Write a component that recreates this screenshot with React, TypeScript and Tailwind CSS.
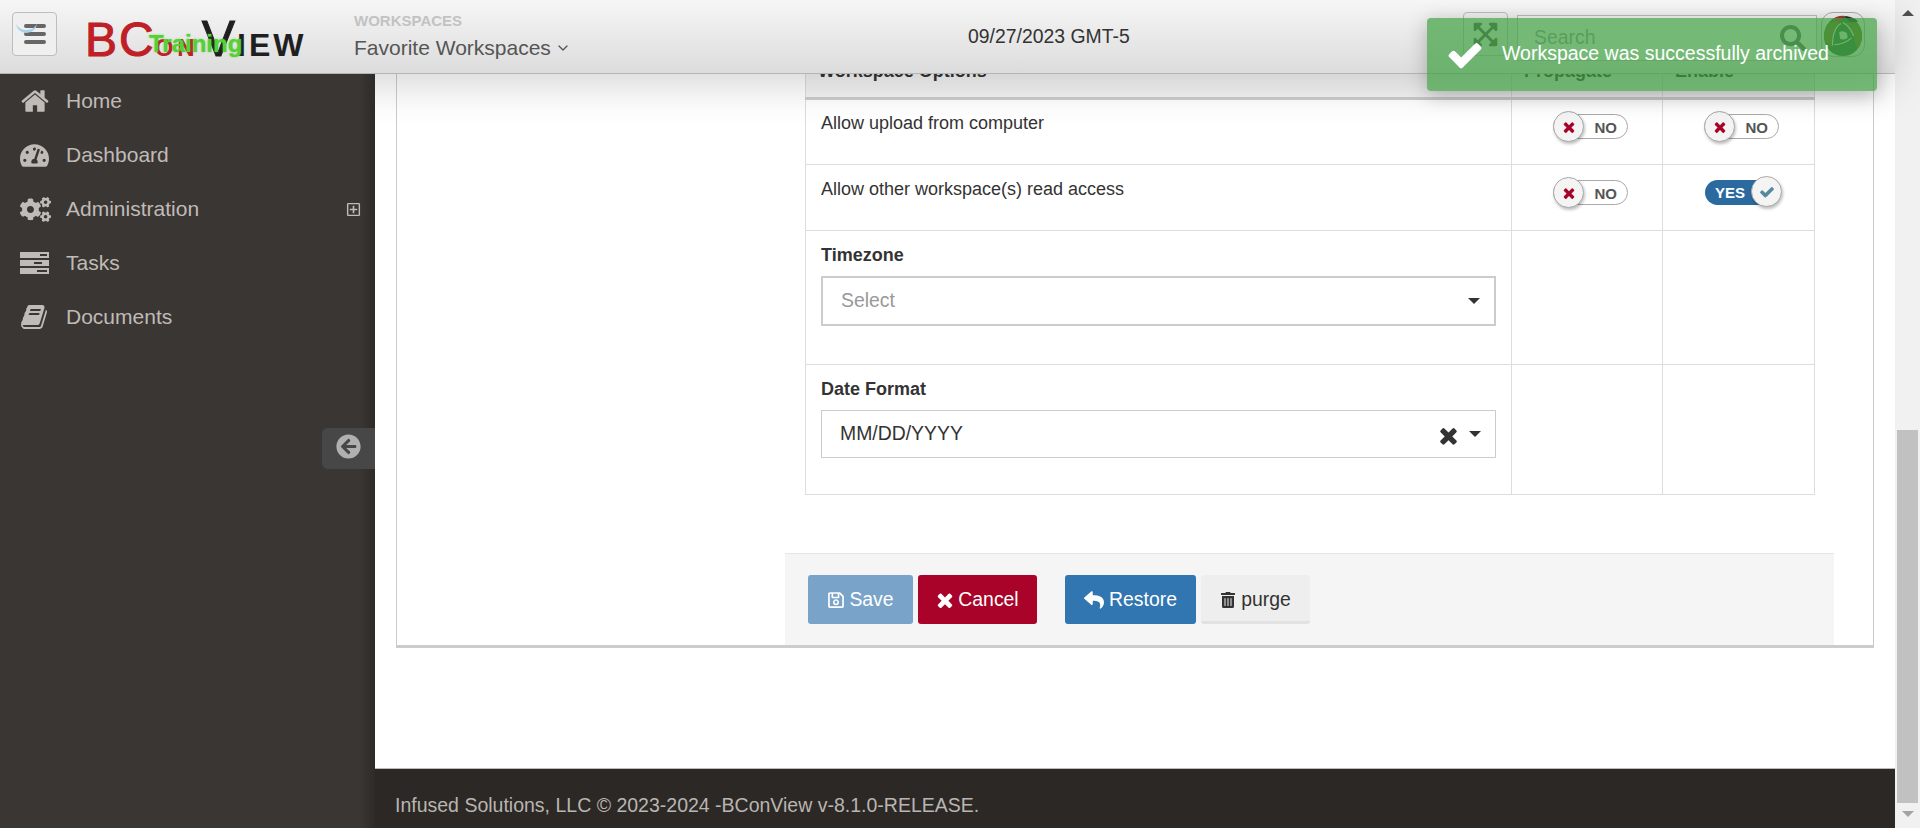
import React from "react";
import {
  FaArrowCircleLeft,
  FaCogs,
  FaExpandArrowsAlt,
  FaRegPlusSquare,
  FaRegSave,
  FaReply,
  FaSearch,
  FaTachometerAlt,
  FaTrashAlt,
} from "react-icons/fa";
import { ChevronDown } from "lucide-react";

function HomeIcon() {
  return (
    <svg viewBox="0 0 1792 1792" className="w-[30px] h-[30px] fill-current">
      <path d="M1472 992v480q0 26-19 45t-45 19h-384v-384h-256v384h-384q-26 0-45-19t-19-45v-480q0-1 .5-3t.5-3l575-474 575 474q1 2 1 6zm223-69l-62 74q-8 9-21 11h-3q-13 0-21-7l-692-577-692 577q-12 8-24 7-13-2-21-11l-62-74q-8-10-7-23.5t11-21.5l719-599q32-26 76-26t76 26l244 204v-195q0-14 9-23t23-9h192q14 0 23 9t9 23v408l219 182q10 8 11 21.5t-7 23.5z" />
    </svg>
  );
}

function BookIcon() {
  return (
    <svg viewBox="0 0 1792 1792" className="w-[28px] h-[28px] fill-current">
      <path d="M1703 478q40 57 18 129l-275 906q-19 64-76.5 107.5t-122.5 43.5h-923q-77 0-148.5-53.5t-99.5-131.5q-24-67-2-127 0-4 3-27t4-37q1-8-3-21.5t-3-19.5q2-11 8-21t16.5-23.5 16.5-23.5q23-38 45-91.5t30-91.5q3-10 .5-30t-.5-28q3-11 17-28t17-23q21-36 42-92t25-90q1-9-2.5-32t.5-28q4-13 22-30.5t22-22.5q19-26 42.5-84.5t27.5-96.5q1-8-3-25.5t-2-26.5q2-8 9-18t18-23 17-21q8-12 16.5-30.5t15-35 16-36 19.5-32 26.5-23.5 36-11.5 47.5 5.5l-1 3q38-9 51-9h761q74 0 114 56t18 130l-274 906q-36 119-71.5 153.5t-128.5 34.5h-869q-27 0-38 15-11 16-1 43 24 70 144 70h923q29 0 56-15.5t35-41.5l300-987q7-22 5-57 38 15 59 43zm-1064 2q-4 13 2 22.5t20 9.5h608q13 0 25.5-9.5t16.5-22.5l21-64q4-13-2-22.5t-20-9.5h-608q-13 0-25.5 9.5t-16.5 22.5zm-83 256q-4 13 2 22.5t20 9.5h608q13 0 25.5-9.5t16.5-22.5l21-64q4-13-2-22.5t-20-9.5h-608q-13 0-25.5 9.5t-16.5 22.5z" />
    </svg>
  );
}

function TasksIcon() {
  return (
    <svg viewBox="0 0 29 22" className="w-[29px] h-[22px] fill-current">
      <path fillRule="evenodd" d="M0 0h29v6H0zM20 2v2h7V2zM0 8h29v6H0zM14 10v2h8v-2zM0 16h29v6H0zM17 18v2h10v-2z" />
    </svg>
  );
}

function TimesIcon({ size }: { size: number }) {
  return (
    <svg viewBox="0 0 1792 1792" width={size} height={size} className="fill-current shrink-0">
      <path d="M1490 1322q0 40-28 68l-136 136q-28 28-68 28t-68-28l-294-294-294 294q-28 28-68 28t-68-28l-136-136q-28-28-28-68t28-68l294-294-294-294q-28-28-28-68t28-68l136-136q28-28 68-28t68 28l294 294 294-294q28-28 68-28t68 28l136 136q28 28 28 68t-28 68l-294 294 294 294q28 28 28 68z" />
    </svg>
  );
}

function CheckIcon({ size }: { size: number }) {
  return (
    <svg viewBox="0 0 1792 1792" width={size} height={size} className="fill-current shrink-0">
      <path d="M1671 566q0 40-28 68l-724 724-136 136q-28 28-68 28t-68-28l-136-136-362-362q-28-28-28-68t28-68l136-136q28-28 68-28t68 28l294 295 656-657q28-28 68-28t68 28l136 136q28 28 28 68z" />
    </svg>
  );
}

function Avatar() {
  return (
    <svg viewBox="0 0 44 46" className="w-[42px] h-[44px]">
      <ellipse cx="22" cy="24" rx="20" ry="21" fill="#2c6a35" />
      <path d="M10 7 Q17 2 24 3 L18 9 Q13 8 10 7z" fill="#b03030" />
      <path d="M24 3 Q34 4 38 9 L29 9 Q26 7 24 3z" fill="#2a2a2a" />
      <path d="M2 26 Q2 14 12 8 Q17 9 20 11 Q11 16 11 36 Q3 32 2 26z" fill="#6b6d1e" />
      <path d="M22 10 Q31 9 37 11 Q42 17 42 25 Q41 33 37 37 Q33 28 33 22 Q30 15 22 10z" fill="#6b6d1e" />
      <path d="M18 20 Q22 18 26 21 L27 26 Q23 29 19 27z" fill="#cfe3cf" />
      <path d="M13 33 Q23 33 31 26 M22 10 Q30 15 33 24 M20 11 Q11 16 11 34" fill="none" stroke="#e8e8e8" strokeWidth="1.2" />
    </svg>
  );
}

function NoToggle() {
  return (
    <div className="relative ml-[41px] w-[75px] h-[25px] mt-[3px] rounded-full border border-[#aaa] bg-white">
      <span className="absolute right-[10px] top-[2px] text-[15px] font-bold text-[#555]">NO</span>
      <span className="absolute -left-px -top-[4px] w-[31px] h-[31px] rounded-full border border-[#aaa] bg-[#f4f4f4] shadow-[1px_2px_3px_rgba(0,0,0,0.25)] flex items-center justify-center text-[#a90329]">
        <TimesIcon size={16} />
      </span>
    </div>
  );
}

function YesToggle() {
  return (
    <div className="relative ml-[42px] w-[70px] h-[25px] mt-[3px] rounded-full bg-[#2a6a9e]">
      <span className="absolute left-[10px] top-[2px] text-[15px] font-bold text-white">YES</span>
      <span className="absolute -right-[7px] -top-[4px] w-[31px] h-[31px] rounded-full border border-[#aaa] bg-[#f4f4f4] shadow-[1px_2px_3px_rgba(0,0,0,0.25)] flex items-center justify-center text-[#57889c]">
        <CheckIcon size={16} />
      </span>
    </div>
  );
}

function Caret() {
  return <span className="w-0 h-0 border-x-[6px] border-x-transparent border-t-[6px] border-t-[#333]" />;
}

const navItems = [
  { label: "Home", icon: <HomeIcon /> },
  { label: "Dashboard", icon: <FaTachometerAlt size={29} /> },
  { label: "Administration", icon: <FaCogs size={31} />, expandable: true },
  { label: "Tasks", icon: <TasksIcon /> },
  { label: "Documents", icon: <BookIcon /> },
];

function Sidebar() {
  return (
    <aside className="relative z-20 w-[375px] shrink-0 bg-[linear-gradient(to_right,#3a3633_96%,#2e2a27)] text-[#c0bbb7]">
      <nav className="flex flex-col">
        {navItems.map((item) => (
          <div key={item.label} className="flex items-center h-[54px] pl-[20px] text-[21px]">
            <span className="w-[46px] flex justify-start">{item.icon}</span>
            <span>{item.label}</span>
            {item.expandable && <FaRegPlusSquare size={15} className="ml-auto mr-[14px] text-[#c0bbb7]" />}
          </div>
        ))}
      </nav>
      <div className="absolute right-0 top-[354px] w-[53px] h-[41px] rounded-l-md bg-[#474747] flex items-start pt-[6px] pl-[14px] text-[#b0b0b0]">
        <FaArrowCircleLeft size={25} />
      </div>
    </aside>
  );
}

function Header() {
  return (
    <header className="relative z-10 h-[74px] shrink-0 flex items-start border-b border-[#b5b5b5] bg-[linear-gradient(to_bottom,#f6f6f6,#dcdcdc)] shadow-[0_12px_40px_rgba(0,0,0,0.16)]">
      <div className="relative mt-[12px] ml-[12px] w-[45px] h-[44px] rounded border border-[#bdbdbd] bg-[#efefef] flex flex-col items-center justify-center gap-[4px]">
        <span className="w-[22px] h-[4px] rounded-sm bg-[#666]" />
        <span className="w-[22px] h-[4px] rounded-sm bg-[#666]" />
        <span className="w-[22px] h-[4px] rounded-sm bg-[#666]" />
        <span className="absolute left-[3px] top-[6px] w-[21px] h-[14px] rounded-b-full border-b-[3px] border-[#a9d3ec]" />
      </div>
      <div className="relative ml-[28px] mt-[14px] w-[269px] h-[48px] flex items-baseline leading-none">
        <span className="text-[48px] text-[#bf2026] tracking-[2px] [-webkit-text-stroke:1px_#bf2026]">BC</span>
        <span className="text-[24px] text-[#bf2026] font-bold tracking-[4px] -ml-px">ON</span>
        <span className="text-[50px] text-[#1f1f1f] [-webkit-text-stroke:1px_#1f1f1f] ml-[3px]">V</span>
        <span className="text-[32px] text-[#1f1f1f] font-bold tracking-[3px] ml-[2px]">IEW</span>
        <span className="absolute left-[64px] top-[18px] text-[24px] font-bold text-[#55d035] [text-shadow:0_0_2px_rgba(80,200,50,0.7)]">Training</span>
      </div>
      <div className="ml-0 mt-[12px] w-[400px]">
        <div className="text-[15px] leading-[18px] font-bold text-[#c2c2c2]">WORKSPACES</div>
        <div className="flex items-center gap-[4px] text-[21px] leading-[30px] mt-[3px] text-[#555]">
          Favorite Workspaces <ChevronDown size={16} />
        </div>
      </div>
      <div className="mt-[22px] ml-[214px] w-[274px] text-[19.4px] leading-[28px] text-[#333]">09/27/2023 GMT-5</div>
      <div className="ml-auto mt-[12px] flex items-start">
        <div className="w-[45px] h-[44px] rounded border border-[#bdbdbd] flex items-center justify-center text-[#555]">
          <FaExpandArrowsAlt size={27} />
        </div>
        <div className="ml-[9px] mt-[3px] w-[300px] h-[46px] border border-[#bbb] bg-[#f4f4f4] flex items-center pl-[16px] pr-[10px] text-[19.4px] text-[#999]">
          Search
          <FaSearch size={26} className="ml-auto text-[#666]" />
        </div>
        <div className="ml-[4px] mr-[30px] w-[44px] h-[45px] rounded-xl border border-[#aaa] flex items-center justify-center">
          <Avatar />
        </div>
      </div>
    </header>
  );
}

function OptionsTable() {
  return (
    <table className="ml-[408px] w-[1009px] table-fixed border-collapse text-[18px] text-[#333]">
      <colgroup>
        <col className="w-[706px]" />
        <col className="w-[151px]" />
        <col className="w-[152px]" />
      </colgroup>
      <thead>
        <tr className="h-[41px] bg-[#f4f4f4] font-bold">
          <th className="border border-[#ddd] border-b-[3px] border-b-[#ccc] text-left pl-[12px] align-top">Workspace Options</th>
          <th className="border border-[#ddd] border-b-[3px] border-b-[#ccc] text-left pl-[12px] align-top">Propagate</th>
          <th className="border border-[#ddd] border-b-[3px] border-b-[#ccc] text-left pl-[12px] align-top">Enable</th>
        </tr>
      </thead>
      <tbody>
        <tr className="h-[66px]">
          <td className="border border-[#ddd] align-top pl-[15px] pt-[10px]">Allow upload from computer</td>
          <td className="border border-[#ddd] align-top pt-[11px]"><NoToggle /></td>
          <td className="border border-[#ddd] align-top pt-[11px]"><NoToggle /></td>
        </tr>
        <tr className="h-[66px]">
          <td className="border border-[#ddd] align-top pl-[15px] pt-[11px]">Allow other workspace(s) read access</td>
          <td className="border border-[#ddd] align-top pt-[12px]"><NoToggle /></td>
          <td className="border border-[#ddd] align-top pt-[12px]"><YesToggle /></td>
        </tr>
        <tr className="h-[134px]">
          <td className="border border-[#ddd] align-top pl-[15px] pr-[15px] pt-[11px]">
            <div className="font-bold leading-[26px] mb-[8px]">Timezone</div>
            <div className="h-[50px] border-2 border-[#ccc] flex items-center pl-[18px] pr-[14px] text-[19.4px] text-[#999]">
              Select
              <span className="ml-auto flex"><Caret /></span>
            </div>
          </td>
          <td className="border border-[#ddd]" />
          <td className="border border-[#ddd]" />
        </tr>
        <tr className="h-[130px]">
          <td className="border border-[#ddd] align-top pl-[15px] pr-[15px] pt-[11px]">
            <div className="font-bold leading-[26px] mb-[8px]">Date Format</div>
            <div className="h-[48px] border border-[#ccc] flex items-center pl-[18px] pr-[14px] text-[19.4px] text-[#333]">
              MM/DD/YYYY
              <span className="ml-auto flex items-center gap-[8px] text-[#333]">
                <span className="mt-[3px] -ml-[3px]"><TimesIcon size={25} /></span>
                <span className="-mt-[1px] flex"><Caret /></span>
              </span>
            </div>
          </td>
          <td className="border border-[#ddd]" />
          <td className="border border-[#ddd]" />
        </tr>
      </tbody>
    </table>
  );
}

function FormActions() {
  return (
    <div className="ml-[388px] mt-[58px] w-[1049px] h-[92px] border-t border-[#e6e6e6] bg-[#f5f5f5] flex items-start pt-[21px] pl-[23px] text-[19.4px]">
      <button className="h-[49px] w-[105px] rounded-[3px] bg-[#79a3c8] text-white flex items-center justify-center gap-[4px]">
        <FaRegSave size={18} /> Save
      </button>
      <button className="ml-[5px] h-[49px] w-[119px] rounded-[3px] bg-[#a90329] text-white flex items-center justify-center gap-[2px] pr-[2px]">
        <TimesIcon size={22} /> Cancel
      </button>
      <button className="ml-[28px] h-[49px] w-[131px] rounded-[3px] bg-[#3276b1] text-white flex items-center justify-center gap-[5px]">
        <FaReply size={20} /> Restore
      </button>
      <button className="ml-[5px] h-[49px] w-[109px] rounded-[3px] bg-[#eeeeee] border-b-[3px] border-[#e2e2e2] text-[#333] flex items-center justify-center gap-[5px] pt-[3px]">
        <FaTrashAlt size={16} /> purge
      </button>
    </div>
  );
}

function Scrollbar() {
  return (
    <div className="w-[25px] shrink-0 bg-[#f1f1f1] flex flex-col items-center">
      <span className="mt-[10px] w-0 h-0 border-x-[6px] border-x-transparent border-b-[6px] border-b-[#505050]" />
      <div className="mt-[414px] w-[21px] h-[373px] bg-[#c1c1c1]" />
      <span className="mt-[8px] w-0 h-0 border-x-[6px] border-x-transparent border-t-[6px] border-t-[#a3a3a3]" />
    </div>
  );
}

export default function App() {
  return (
    <div className="relative flex w-[1920px] h-[828px] overflow-hidden bg-white font-['Liberation_Sans',Arial,sans-serif]">
      <div className="flex flex-col w-[1895px]">
        <Header />
        <div className="flex flex-1 min-h-0">
          <Sidebar />
          <div className="flex-1 flex flex-col min-w-0">
            <main className="flex-1 min-h-0 pl-[21px] pr-[21px]">
              <div className="-mt-[17px] border-x border-b-[3px] border-[#ccc] bg-white">
                <OptionsTable />
                <FormActions />
              </div>
            </main>
            <footer className="h-[60px] border-t border-[#bbb] bg-[#2c2825] flex items-center pl-[20px] pt-[14px] text-[19.5px] text-[#b9b5b1]">
              Infused Solutions, LLC © 2023-2024 -BConView v-8.1.0-RELEASE.
            </footer>
          </div>
        </div>
      </div>
      <Scrollbar />
      <div className="absolute z-30 left-[1427px] top-[18px] w-[450px] h-[73px] rounded-[4px] bg-[#3f9f42]/70 shadow-[0_4px_20px_rgba(0,0,0,0.25)] flex items-center pl-[19px] text-[19.5px] text-white">
        <CheckIcon size={38} />
        <span className="ml-[18px] -mt-[2px]">Workspace was successfully archived</span>
      </div>
    </div>
  );
}
